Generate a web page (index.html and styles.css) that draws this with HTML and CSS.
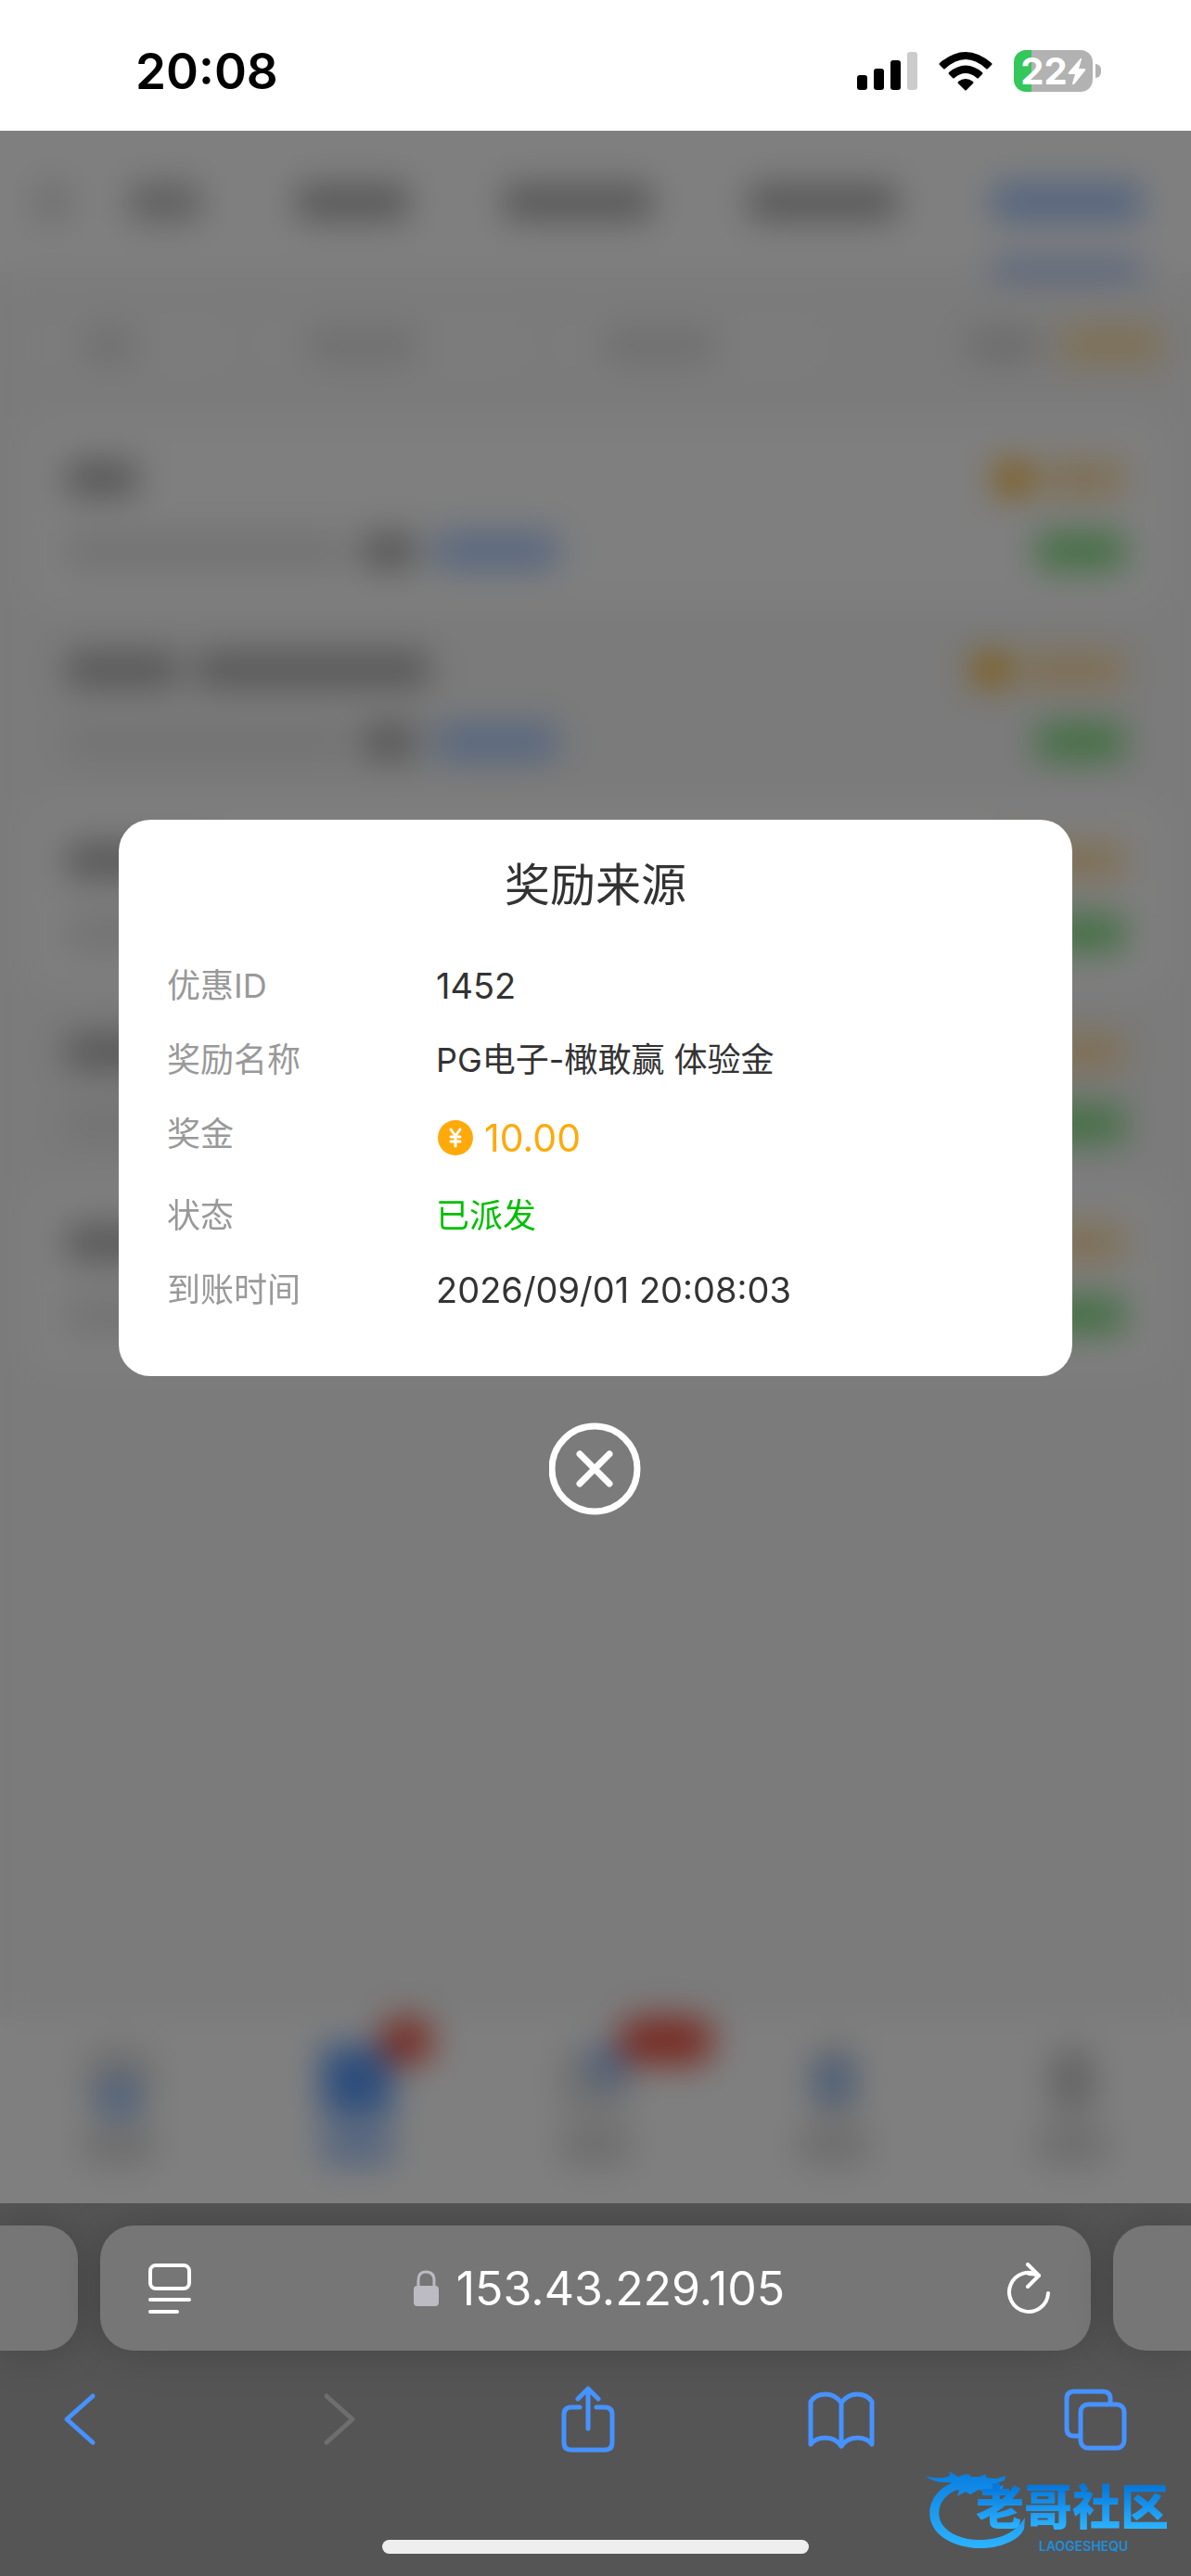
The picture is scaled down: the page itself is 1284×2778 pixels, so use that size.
FILE: index.html
```html
<!DOCTYPE html>
<html lang="zh-CN">
<head>
  <meta charset="UTF-8">
  <meta name="viewport" content="width=device-width, initial-scale=1.0">
  <title>奖励来源</title>
  <link rel="stylesheet" href="styles.css">
</head>
<body>
  <header class="status-bar">
    <span class="time">20:08</span>
    <div class="status-icons">
      <svg width="65" height="42" viewBox="0 0 65 42">
        <rect x="0" y="25" width="11" height="16" rx="3"/>
        <rect x="18" y="18" width="11" height="23" rx="3"/>
        <rect x="36" y="9" width="11" height="32" rx="3"/>
        <rect x="54" y="0" width="11" height="41" rx="3" fill="#ccc"/>
      </svg>
      <svg width="58" height="42" viewBox="0 0 58 42">
        <path d="M1 12Q29-12 57 12Q58 13 57 14L53 18Q52 19 51 18Q29-2 7 18Q6 19 5 18L1 14Q0 13 1 12Z"/>
        <path d="M11 22Q29 7 47 22Q48 23 47 24L43 28Q42 29 41 28Q29 18 17 28Q16 29 15 28L11 24Q10 23 11 22Z"/>
        <path d="M21 32Q29 26 37 32Q38 33 37 34L30 41Q29 42 28 41L21 34Q20 33 21 32Z"/>
      </svg>
      <div class="battery">
        <span>22</span>
        <svg width="20" height="30" viewBox="0 0 20 30"><path d="M14 1L1 16Q0 18 2 18H8L5 28Q6 30 7 29L19 14Q20 12 18 12H12L15 2Q15 0 14 1Z" fill="#fff"/></svg>
      </div>
    </div>
  </header>

  <main class="stage">
    <!-- page behind the popup -->
    <div class="page" aria-hidden="true">
      <div class="tabs">
        <i class="bar back"></i>
        <div class="tab-list">
          <i class="bar w2 light"></i>
          <i class="bar w3"></i>
          <i class="bar w4"></i>
          <i class="bar w4"></i>
          <i class="bar w4 active"></i>
        </div>
      </div>
      <div class="filters">
        <div class="filter short"><i class="bar"></i></div>
        <div class="filter"><i class="bar"></i></div>
        <div class="filter"><i class="bar"></i></div>
        <div class="total"><i class="bar"></i><i class="bar gold"></i></div>
      </div>
      <div class="records">
        <div class="record">
          <div class="line"><i class="bar w2"></i><i class="coin"></i><i class="bar gold"></i></div>
          <div class="line"><i class="bar date"></i><i class="bar label"></i><i class="bar blue"></i><i class="bar green"></i></div>
        </div>
        <div class="record">
          <div class="line"><i class="bar w3"></i><i class="bar long"></i><i class="coin"></i><i class="bar gold wide"></i></div>
          <div class="line"><i class="bar date"></i><i class="bar label"></i><i class="bar blue"></i><i class="bar green"></i></div>
        </div>
        <div class="record">
          <div class="line"><i class="bar w4"></i><i class="coin"></i><i class="bar gold"></i></div>
          <div class="line"><i class="bar date"></i><i class="bar green"></i></div>
        </div>
        <div class="record">
          <div class="line"><i class="bar w4"></i><i class="coin"></i><i class="bar gold"></i></div>
          <div class="line"><i class="bar date"></i><i class="bar green"></i></div>
        </div>
        <div class="record">
          <div class="line"><i class="bar w4"></i><i class="coin"></i><i class="bar gold"></i></div>
          <div class="line"><i class="bar date"></i><i class="bar green"></i></div>
        </div>
      </div>
      <div class="nav">
        <div class="nav-item"><i class="icon"><i class="dot low"></i></i><i class="bar"></i></div>
        <div class="nav-item on"><i class="icon"></i><i class="bar"></i><i class="badge"></i></div>
        <div class="nav-item"><i class="icon"><i class="dot side"></i></i><i class="bar"></i><i class="badge big"></i></div>
        <div class="nav-item"><i class="icon narrow"><i class="dot"></i></i><i class="bar"></i></div>
        <div class="nav-item"><i class="icon narrow"></i><i class="bar"></i></div>
      </div>
    </div>

    <div class="overlay">
      <section class="popup" role="dialog" aria-labelledby="popupTitle">
        <h1 id="popupTitle">奖励来源</h1>
        <dl>
          <dt>优惠ID</dt>
          <dd class="num">1452</dd>
          <dt>奖励名称</dt>
          <dd>PG电子-橄敢赢 体验金</dd>
          <dt>奖金</dt>
          <dd class="amount">
            <svg width="38" height="38" viewBox="0 0 38 38">
              <circle cx="19" cy="19" r="19" fill="#ffaa0a"/>
              <path d="M14 10L19 17L24 10M14 18H24M14 23H24M19 17V28" fill="none" stroke="#fff" stroke-width="3" stroke-linecap="round" stroke-linejoin="round"/>
            </svg>
            10.00
          </dd>
          <dt>状态</dt>
          <dd class="done">已派发</dd>
          <dt>到账时间</dt>
          <dd class="num">2026/09/01 20:08:03</dd>
        </dl>
      </section>
      <button type="button" class="close" aria-label="关闭">
        <svg width="100" height="100" viewBox="0 0 100 100" fill="none" stroke="#fff" stroke-linecap="round">
          <circle cx="49" cy="50" r="46" stroke-width="7"/>
          <path d="M33 34L65 66M65 34L33 66" stroke-width="7"/>
        </svg>
      </button>
    </div>
  </main>

  <footer class="browser">
    <div class="address-row">
      <div class="pill side-left"></div>
      <div class="pill address">
        <button type="button" aria-label="页面设置">
          <svg width="46" height="56" viewBox="0 0 46 56" fill="none" stroke="#fff" stroke-width="4" stroke-linecap="round">
            <rect x="2" y="3" width="42" height="25" rx="6"/>
            <path d="M2 40H44M2 53H31"/>
          </svg>
        </button>
        <a href="#" class="host">
          <svg width="28" height="40" viewBox="0 0 28 40">
            <rect x="0" y="17" width="27" height="22" rx="4" fill="#bcbbc3"/>
            <path d="M5 18V11Q5 2 13 2Q22 2 22 11V18" fill="none" stroke="#bcbbc3" stroke-width="3"/>
          </svg>
          153.43.229.105
        </a>
        <button type="button" aria-label="刷新">
          <svg width="46" height="56" viewBox="0 0 46 56" fill="none" stroke="#fff" stroke-width="4" stroke-linecap="round" stroke-linejoin="round">
            <path d="M44 33A21 21 0 1 1 34 14Q29 12 23 12"/>
            <path d="M22 2L34 14L22 26"/>
          </svg>
        </button>
      </div>
      <div class="pill side-right"></div>
    </div>
    <nav class="toolbar">
      <button type="button" aria-label="后退">
        <svg width="36" height="72" viewBox="0 0 36 72"><path d="M32 11L4 36L32 61"/></svg>
      </button>
      <button type="button" aria-label="前进" disabled>
        <svg width="48" height="72" viewBox="0 0 48 72"><path d="M16 11L44 36L16 61"/></svg>
      </button>
      <button type="button" aria-label="分享">
        <svg width="58" height="72" viewBox="0 0 58 72"><path d="M20 23H11Q3 23 3 31V61Q3 69 11 69H47Q55 69 55 61V31Q55 23 47 23H38M29 46V3M18 14L29 3L40 14"/></svg>
      </button>
      <button type="button" aria-label="书签">
        <svg width="72" height="72" viewBox="0 0 72 72"><path d="M36 18Q29 9 19 9Q8 9 3 17V63Q8 56 19 56Q30 56 36 65Q42 56 53 56Q64 56 69 63V17Q64 9 53 9Q43 9 36 18V64"/></svg>
      </button>
      <button type="button" aria-label="标签页">
        <svg width="68" height="72" viewBox="0 0 68 72"><rect x="18" y="20" width="47" height="47" rx="8"/><path d="M17 54H11Q3 54 3 46V14Q3 6 11 6H42Q50 6 50 14V19"/></svg>
      </button>
    </nav>
    <div class="home-indicator"></div>

    <svg class="watermark" width="272" height="104" viewBox="0 0 272 104">
      <defs>
        <linearGradient id="ringBlue" gradientUnits="userSpaceOnUse" x1="0" y1="10" x2="0" y2="88">
          <stop offset="0" stop-color="#0a7fe0"/>
          <stop offset="1" stop-color="#2bb2ff"/>
        </linearGradient>
        <linearGradient id="textBlue" gradientUnits="userSpaceOnUse" x1="0" y1="24" x2="0" y2="68">
          <stop offset="0" stop-color="#0678dc"/>
          <stop offset="1" stop-color="#2bb2ff"/>
        </linearGradient>
      </defs>
      <g fill="url(#ringBlue)">
        <path d="M40 16C8 22-4 50 10 70C20 84 43 91 62 90C84 89 102 80 106 69L107 57C98 72 82 80 62 81C40 82 22 74 16 61C10 46 19 30 42 24Z"/>
        <path d="M0 12Q12 16 23 13Q28 12 25 7L35 13Q40 10 46 10L49 13L58 13L64 10L66 14L76 15L86 12L85 17L76 20L70 21L77 24L84 22L82 28L72 26L66 29L57 27L48 32L43 29L34 34L36 28L28 24L34 20L24 19Q8 20 0 12Z"/>
      </g>
      <text class="mark-name" x="54" y="65" fill="url(#textBlue)">老哥社区</text>
      <text class="mark-latin" x="122" y="93" fill="#1c8fdc">LAOGESHEQU</text>
    </svg>
  </footer>
</body>
</html>
```
FILE: styles.css
```css
* {
  box-sizing: border-box;
}
body {
  margin: 0;
  min-height: 100vh;
  display: flex;
  flex-direction: column;
  font-family: Inter, 'Noto Sans CJK SC', sans-serif;
  font-size: 36px;
  color: #333;
  background: #555;
}
button {
  display: flex;
  padding: 0;
  border: none;
  background: none;
  cursor: pointer;
}

/* status bar */
.status-bar {
  height: 141px;
  padding: 12px 106px 0 146px;
  display: flex;
  justify-content: space-between;
  align-items: center;
  background: #fff;
  color: #000;
}
.time {
  font-size: 53px;
  font-weight: 600;
}
.status-icons {
  display: flex;
  align-items: center;
  gap: 23px;
}
.battery {
  position: relative;
  width: 85px;
  height: 45px;
  display: flex;
  justify-content: center;
  align-items: center;
  border-radius: 13px;
  background: linear-gradient(90deg, #34c759 19px, #b2b2b2 19px);
  color: #fff;
  font-size: 40px;
  font-weight: 700;
}
.battery::after {
  content: "";
  position: absolute;
  left: 88px;
  top: 15px;
  width: 6px;
  height: 15px;
  border-radius: 0 6px 6px 0;
  background: #b2b2b2;
}

/* page and overlay share one grid cell */
.stage {
  flex: 1;
  display: grid;
}
.page, .overlay {
  grid-area: 1 / 1;
}
.page {
  display: flex;
  flex-direction: column;
  background: #f6f6f6;
}
.bar {
  display: block;
  width: 76px;
  height: 40px;
  background: #b2b2b2;
}
.bar.w3 {
  width: 120px;
}
.bar.w4 {
  width: 160px;
}
.bar.light {
  background: #bebebe;
}
.bar.gold {
  width: 88px;
  background: #ffdfa8;
}
.bar.gold.wide {
  width: 112px;
}
.tabs {
  height: 153px;
  padding: 0 54px 0 38px;
  display: flex;
  align-items: center;
  gap: 66px;
  background: #fff;
}
.tab-list {
  flex: 1;
  display: flex;
  justify-content: space-between;
}
.tabs .back {
  width: 36px;
  background: #dcdcdc;
}
.tabs .active {
  position: relative;
  background: #a6c8ff;
}
.tabs .active::after {
  content: "";
  position: absolute;
  left: 0;
  top: 88px;
  width: 100%;
  height: 9px;
  background: #3d7dff;
}
.filters {
  height: 156px;
  padding: 0 32px 0 36px;
  display: flex;
  align-items: center;
  gap: 20px;
}
.filter {
  width: 300px;
  height: 72px;
  padding: 0 54px;
  display: flex;
  align-items: center;
  border-radius: 36px;
  background: #f9f9f9;
}
.filter.short {
  width: 220px;
}
.filter .bar {
  width: 120px;
  background: #e0e0e0;
}
.filter.short .bar {
  width: 56px;
}
.total {
  flex: 1;
  display: flex;
  justify-content: flex-end;
  gap: 24px;
}
.total .bar {
  background: #dadada;
}
.total .bar.gold {
  width: 108px;
  background: #ffe0a8;
}
.records {
  flex: 1;
  margin: 0 28px;
}
.record {
  height: 206px;
  padding: 46px 44px 0;
  display: flex;
  flex-direction: column;
  gap: 38px;
}
.record:nth-child(odd) {
  border-radius: 30px;
  background: #fefefe;
}
.line {
  display: flex;
  align-items: center;
  gap: 20px;
}
.coin {
  width: 40px;
  height: 40px;
  margin-left: auto;
  border-radius: 50%;
  background: #ffb01a;
}
.coin + .gold {
  margin-left: -8px;
}
.bar.long {
  width: 250px;
}
.bar.date {
  width: 298px;
  background: #e6e6e6;
}
.bar.label {
  width: 60px;
}
.bar.blue {
  width: 130px;
  background: #b0ceff;
}
.bar.green {
  width: 94px;
  margin-left: auto;
  background: #86de86;
}
.nav {
  height: 200px;
  display: grid;
  grid-template-columns: repeat(5, 1fr);
  background: #fff;
}
.nav-item {
  position: relative;
  padding-top: 30px;
  display: flex;
  flex-direction: column;
  align-items: center;
  gap: 12px;
}
.nav .icon {
  width: 76px;
  height: 76px;
  display: flex;
  justify-content: center;
  align-items: center;
  border-radius: 24px;
  background: #e0e0e0;
}
.nav .narrow {
  width: 50px;
  background: #cbcbcb;
}
.nav .bar {
  background: #dadada;
}
.nav .dot {
  width: 36px;
  height: 40px;
  background: #8fbcff;
}
.nav .dot.low {
  align-self: flex-end;
}
.nav .dot.side {
  align-self: flex-start;
  margin-left: 30px;
}
.nav .on .icon {
  border-radius: 8px;
  background: #5a9af8;
}
.nav .on .bar {
  background: #a6c8ff;
}
.badge {
  position: absolute;
  left: 152px;
  top: 0;
  width: 58px;
  height: 50px;
  border-radius: 25px;
  background: #ef5544;
}
.badge.big {
  width: 104px;
}

.overlay {
  padding: 0 128px;
  display: flex;
  flex-direction: column;
  justify-content: center;
  align-items: center;
  gap: 50px;
  background: rgba(0, 0, 0, 0.5);
  backdrop-filter: blur(18px);
}
.popup {
  width: 100%;
  height: 600px;
  padding: 36px 52px 0;
  border-radius: 34px;
  background: #fff;
}
.popup h1 {
  margin: 0 0 46px;
  font-size: 49px;
  font-weight: 400;
  line-height: 70px;
  text-align: center;
}
.popup dl {
  margin: 0;
  display: grid;
  grid-template-columns: 290px 1fr;
  row-gap: 26px;
  line-height: 54px;
}
.popup dt {
  color: #999;
}
.popup dd {
  margin: 0;
}
.popup .num {
  font-size: 38px;
}
.popup .amount {
  display: flex;
  align-items: center;
  gap: 12px;
  padding-left: 2px;
  color: #ffaa0a;
  font-size: 41px;
  line-height: 62px;
}
.popup .done {
  color: #00bf00;
}

/* browser controls */
.browser {
  position: relative;
  height: 402px;
  padding-top: 24px;
  background: #555;
  overflow: hidden;
}
.address-row {
  display: flex;
  gap: 24px;
}
.pill {
  width: 84px;
  height: 135px;
  background: #767676;
  box-shadow: 0 0 48px rgba(0, 0, 0, 0.2);
}
.side-left {
  border-radius: 0 36px 36px 0;
}
.side-right {
  border-radius: 36px 0 0 36px;
}
.address {
  flex: 1;
  padding: 0 44px 0 52px;
  display: flex;
  justify-content: space-between;
  align-items: center;
  border-radius: 36px;
}
.host {
  display: flex;
  align-items: center;
  gap: 18px;
  color: #fff;
  font-size: 50px;
  text-decoration: none;
}
.toolbar {
  padding: 38px 67px 0 50px;
  display: flex;
  justify-content: space-between;
  align-items: center;
}
.toolbar button {
  width: 72px;
  justify-content: center;
}
.toolbar svg {
  fill: none;
  stroke: #4692ff;
  stroke-width: 5px;
  stroke-linecap: round;
  stroke-linejoin: round;
}
.toolbar button:disabled svg {
  stroke: #6e6e6e;
}
.home-indicator {
  width: 460px;
  height: 15px;
  margin: 94px auto 0;
  border-radius: 8px;
  background: #eee;
}
.watermark {
  position: absolute;
  right: 14px;
  bottom: 16px;
}
.mark-name {
  font-size: 52px;
  font-weight: 900;
}
.mark-latin {
  font-size: 14px;
  font-weight: 600;
}
```
